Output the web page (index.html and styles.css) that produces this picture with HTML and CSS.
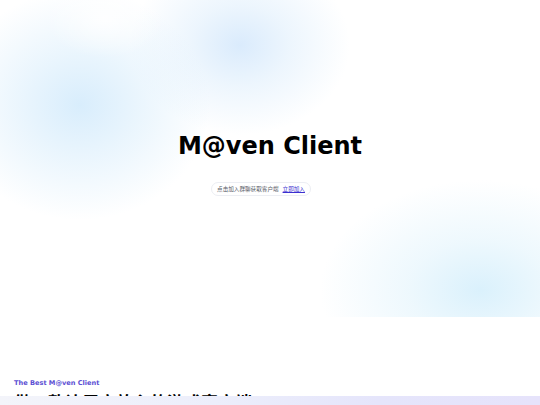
FILE: index.html
```html
<!DOCTYPE html>
<html lang="zh">
<head>
<meta charset="utf-8">
<title>M@ven Client</title>
<link rel="stylesheet" href="styles.css">
</head>
<body>
<section class="hero">
  <h1 class="title">M@ven Client</h1>
  <div class="pill"><span class="pill-text">点击加入群聊获取客户端</span><a class="pill-link" href="#">立即加入</a></div>
</section>
<section class="intro">
  <p class="eyebrow">The Best M@ven Client</p>
  <h2 class="headline">做一款让用户放心的游戏客户端</h2>
</section>
<div class="bottom-bar"></div>
</body>
</html>
```
FILE: styles.css
```css
* { box-sizing: border-box; }
html, body { margin: 0; padding: 0; }
body {
  font-family: "DejaVu Sans", "Noto Sans CJK SC", sans-serif;
  background: #ffffff;
  color: #000;
  overflow: hidden;
  height: 405px;
}
.hero {
  height: 317px;
  display: flex;
  flex-direction: column;
  align-items: center;
  padding-top: 131px;
  background:
    radial-gradient(ellipse 60px 40px at 105px 18px, rgba(255,255,255,0.85), rgba(255,255,255,0) 100%),
    radial-gradient(ellipse 130px 115px at 80px 105px, rgba(214,236,252,0.95) 0%, rgba(220,239,252,0.6) 45%, rgba(230,244,253,0) 100%),
    radial-gradient(ellipse 110px 90px at 240px 45px, rgba(216,234,252,0.95) 0%, rgba(222,238,252,0.55) 45%, rgba(232,243,253,0) 100%),
    radial-gradient(ellipse 160px 110px at 480px 290px, rgba(216,240,252,0.95) 0%, rgba(224,243,252,0.55) 45%, rgba(232,246,253,0) 100%),
    #ffffff;
}
.title {
  margin: 0;
  font-family: "DejaVu Sans", sans-serif;
  font-weight: bold;
  font-size: 24px;
  line-height: 30px;
}
.pill {
  margin-top: 21px;
  margin-right: 18px;
  display: flex;
  align-items: center;
  gap: 4px;
  height: 14px;
  padding: 0 5px;
  border: 1px solid #eceef3;
  border-radius: 8px;
  background: rgba(255,255,255,0.7);
  font-family: "Noto Sans CJK SC", sans-serif;
  font-size: 5.6px;
}
.pill-text { color: #555a66; }
.pill-link { color: #3b2fd0; text-decoration: underline; }
.intro {
  padding: 62px 14px 0;
}
.eyebrow {
  margin: 0;
  font-family: "DejaVu Sans", sans-serif;
  font-weight: bold;
  font-size: 6.6px;
  color: #5b4fd3;
  line-height: 9px;
}
.headline {
  margin: 3px 0 0;
  font-family: "Noto Sans CJK SC", sans-serif;
  font-weight: bold;
  font-size: 17px;
  line-height: 22px;
}
.bottom-bar {
  position: fixed;
  left: 0;
  right: 0;
  bottom: 0;
  height: 9px;
  background: linear-gradient(90deg, #f3f4fa 0%, #eceefb 40%, #e5e5fb 70%, #e6e3fb 100%);
}
```
